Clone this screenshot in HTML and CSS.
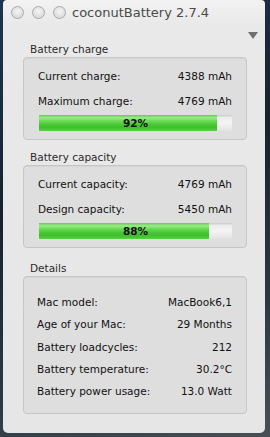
FILE: index.html
```html
<!DOCTYPE html>
<html lang="en">
  <head>
    <meta charset="UTF-8" />
    <meta name="viewport" content="width=device-width, initial-scale=1" />
    <title>coconutBattery 2.7.4</title>
    <link rel="stylesheet" href="styles.css">
  </head>
  <body>
    <div class="window">
      <div class="titlebar">
        <div class="lights">
          <span class="light"></span>
          <span class="light"></span>
          <span class="light"></span>
        </div>
        <div class="title">coconutBattery 2.7.4</div>
      </div>

      <div class="toolbar">
        <span class="disclosure"></span>
      </div>

      <div class="group">
        <div class="group-label">Battery charge</div>
        <div class="box">
          <div class="row"><span>Current charge:</span><span>4388 mAh</span></div>
          <div class="row"><span>Maximum charge:</span><span>4769 mAh</span></div>
          <div class="bar">
            <div class="fill" style="width: 92%"></div>
            <span class="pct">92%</span>
          </div>
        </div>
      </div>

      <div class="group">
        <div class="group-label">Battery capacity</div>
        <div class="box">
          <div class="row"><span>Current capacity:</span><span>4769 mAh</span></div>
          <div class="row"><span>Design capacity:</span><span>5450 mAh</span></div>
          <div class="bar">
            <div class="fill" style="width: 88%"></div>
            <span class="pct">88%</span>
          </div>
        </div>
      </div>

      <div class="group">
        <div class="group-label">Details</div>
        <div class="box details">
          <div class="row"><span>Mac model:</span><span>MacBook6,1</span></div>
          <div class="row"><span>Age of your Mac:</span><span>29 Months</span></div>
          <div class="row"><span>Battery loadcycles:</span><span>212</span></div>
          <div class="row"><span>Battery temperature:</span><span>30.2°C</span></div>
          <div class="row"><span>Battery power usage:</span><span>13.0 Watt</span></div>
        </div>
      </div>
    </div>
  </body>
</html>
```

FILE: styles.css
```css
body {
  margin: 0;
  width: 270px;
  height: 437px;
  overflow: hidden;
  background: linear-gradient(160deg, #1d3550 0%, #16222f 40%, #2a3a44 75%, #4a4f55 100%);
  font-family: "DejaVu Sans", "Liberation Sans", sans-serif;
  font-size: 10.5px;
  color: #111;
}
.window {
  margin-left: 3px;
  width: 262px;
  height: 433px;
  box-sizing: border-box;
  padding: 0 18px 0 20px;
  border-radius: 4px 4px 5px 5px;
  background: linear-gradient(#f2f2f2 0px, #e9e9e9 24px, #e6e6e6 100%);
}
.titlebar {
  display: flex;
  align-items: center;
  height: 25px;
  margin-left: -20px;
  padding-left: 8px;
}
.lights {
  display: flex;
  gap: 8px;
}
.light {
  width: 11px;
  height: 11px;
  border-radius: 50%;
  border: 1px solid #a9a9a9;
  background: radial-gradient(circle at 50% 40%, #f4f4f4 0%, #dcdcdc 70%, #cfcfcf 100%);
}
.title {
  margin-left: 6px;
  font-size: 13px;
  color: #4a4a4a;
}
.toolbar {
  display: flex;
  justify-content: flex-end;
  height: 17px;
  margin-right: -11px;
  padding-top: 7px;
  box-sizing: border-box;
}
.disclosure {
  width: 0;
  height: 0;
  border-left: 5px solid transparent;
  border-right: 5px solid transparent;
  border-top: 7px solid #6f6f6f;
}
.group {
  margin-bottom: 10px;
}
.group:nth-child(4) {
  margin-bottom: 13px;
}
.group-label {
  padding-left: 7px;
  height: 15px;
  line-height: 15px;
  color: #2a2a2a;
}
.box {
  border: 1px solid #c6c6c6;
  border-radius: 4px;
  background: #dedede;
  padding: 9px 14px 8px 14px;
  box-shadow: inset 0 1px 1px rgba(0, 0, 0, 0.04);
}
.row {
  display: flex;
  justify-content: space-between;
  height: 18px;
  line-height: 18px;
  margin-bottom: 7px;
}
.row:nth-child(2) {
  margin-bottom: 5px;
}
.bar {
  position: relative;
  height: 16px;
  margin-left: 1px;
  background: linear-gradient(#c8c8c8 0%, #ececec 15%, #f4f4f4 50%, #e2e2e2 100%);
}
.fill {
  height: 100%;
  background: linear-gradient(#5ccf47 0%, #9ee98e 18%, #6fdc5a 35%, #46c832 60%, #3dbf2a 80%, #5ad346 100%);
}
.pct {
  position: absolute;
  inset: 0;
  text-align: center;
  line-height: 16px;
  font-weight: bold;
  color: #111;
}
.details {
  padding: 16px 14px 13px 13px;
}
.details .row {
  height: 18px;
  margin-bottom: 4.3px;
}
.details .row:last-child {
  margin-bottom: 0;
}
```
